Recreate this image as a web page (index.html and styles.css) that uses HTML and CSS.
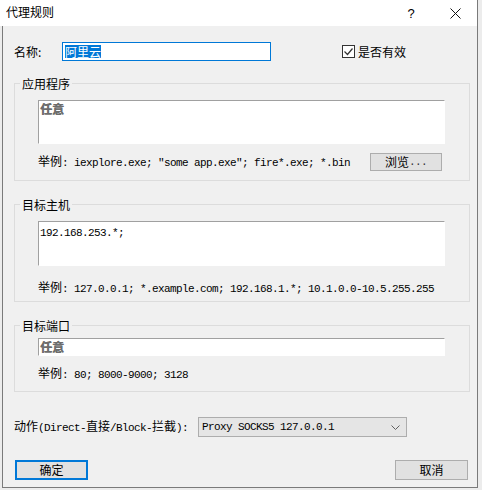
FILE: index.html
```html
<!DOCTYPE html>
<html lang="zh-CN">
<head>
<meta charset="utf-8">
<title>代理规则</title>
<link rel="stylesheet" href="styles.css">
</head>
<body>
<div class="win">
  <div class="titlebar">
    <span class="title">代理规则</span>
    <span class="tb-btn help">?</span>
    <span class="tb-btn close"><svg width="11" height="11" viewBox="0 0 11 11"><path d="M0.5 0.5 L10.5 10.5 M10.5 0.5 L0.5 10.5" stroke="#111" stroke-width="1" fill="none"/></svg></span>
  </div>
  <div class="client">
    <div class="name-row">
      <span class="name-label">名称:</span>
      <div class="name-input"><span class="sel">阿里云</span></div>
      <label class="chk"><span class="box"><svg width="11" height="11" viewBox="0 0 11 11"><path d="M1.5 5.5 L4.5 8.5 L9.5 2.5" stroke="#333" stroke-width="1.2" fill="none"/></svg></span>是否有效</label>
    </div>

    <fieldset class="group g1">
      <legend>应用程序</legend>
      <div class="gbody">
        <div class="edit tall1"><span class="ph">任意</span></div>
        <div class="ex-row">
          <span class="mono"><span class="c">举例</span>: iexplore.exe; "some app.exe"; fire*.exe; *.bin</span>
          <span class="btn browse"><span>浏览</span><span class="mono dots">...</span></span>
        </div>
      </div>
    </fieldset>

    <fieldset class="group g2">
      <legend>目标主机</legend>
      <div class="gbody">
        <div class="edit tall2"><span class="mono">192.168.253.*;</span></div>
        <div class="ex-row">
          <span class="mono"><span class="c">举例</span>: 127.0.0.1; *.example.com; 192.168.1.*; 10.1.0.0-10.5.255.255</span>
        </div>
      </div>
    </fieldset>

    <fieldset class="group g3">
      <legend>目标端口</legend>
      <div class="gbody">
        <div class="edit short"><span class="ph">任意</span></div>
        <div class="ex-row">
          <span class="mono"><span class="c">举例</span>: 80; 8000-9000; 3128</span>
        </div>
      </div>
    </fieldset>

    <div class="action-row">
      <span class="mono action-label"><span class="c">动作</span>(Direct-<span class="c">直接</span>/Block-<span class="c">拦截</span>):</span>
      <div class="select">
        <span class="mono">Proxy SOCKS5 127.0.0.1</span>
        <svg class="chev" width="9" height="5" viewBox="0 0 9 5"><path d="M0.5 0.5 L4.5 4.5 L8.5 0.5" stroke="#606060" stroke-width="1" fill="none"/></svg>
      </div>
    </div>

    <div class="btn-row">
      <span class="btn ok">确定</span>
      <span class="btn cancel">取消</span>
    </div>
  </div>
</div>
</body>
</html>
```

FILE: styles.css
```css
* { box-sizing: border-box; }
html, body { margin: 0; padding: 0; }
body {
  width: 482px;
  height: 490px;
  overflow: hidden;
  background: #ececec;
  font-family: "Noto Sans CJK SC", "Microsoft YaHei", sans-serif;
  font-size: 12px;
  color: #000;
}
.win {
  width: 478px;
  border-right: 1px solid #7a7a7a;
}
.titlebar {
  height: 26px;
  background: #fff;
  display: flex;
  align-items: center;
}
.title {
  flex: 1;
  padding-left: 6px;
  line-height: 14px;
  margin-top: -2px;
}
.tb-btn {
  width: 44px;
  height: 26px;
  display: flex;
  align-items: center;
  justify-content: center;
}
.help {
  font-family: "Liberation Sans", Arial, sans-serif;
  font-size: 13px;
  padding-top: 1px;
}
.close { padding-top: 1px; }
.client {
  margin-left: 2px;
  border-left: 1px solid #7a7a7a;
  border-bottom: 1px solid #7a7a7a;
  background: #f0f0f0;
  height: 462px;
  padding: 16px 7px 0 11px;
  display: flex;
  flex-direction: column;
}
.name-row {
  height: 19px;
  display: flex;
  align-items: center;
}
.name-label { width: 48px; line-height: 14px; }
.name-input {
  width: 209px;
  height: 19px;
  border: 1px solid #0078d7;
  background: #fff;
  padding-left: 2px;
  display: flex;
  align-items: center;
}
.sel {
  display: inline-block;
  height: 13px;
  line-height: 13px;
  background: #0078d7;
  color: #fff;
}
.chk {
  margin-left: 71px;
  display: flex;
  align-items: center;
  gap: 3px;
  line-height: 14px;
}
.box {
  width: 13px;
  height: 13px;
  border: 1px solid #333;
  background: #fff;
  display: flex;
  align-items: center;
  justify-content: center;
}
.group {
  margin: 0;
  padding: 0;
  width: 456px;
  min-width: 0;
  border: 1px solid #dcdcdc;
}
.group legend {
  margin-left: 5px;
  padding: 0 2px;
  line-height: 15px;
  font-size: 12px;
}
.g1 { margin-top: 15px; }
.g2, .g3 { margin-top: 16px; }
.gbody { padding: 9px 24px 9px 23px; }
.g2 .gbody { padding-bottom: 5px; }
.g3 .gbody { padding-top: 5px; }
.edit {
  width: 407px;
  background: #fff;
  border-top: 1px solid #a0a0a0;
  border-left: 1px solid #a0a0a0;
  border-right: 1px solid #fff;
  border-bottom: 1px solid #fff;
  padding: 1px 0 0 1px;
  line-height: 14px;
}
.tall1 { height: 44px; }
.tall2 { height: 45px; padding-top: 2px; }
.short { height: 18px; padding-top: 1px; }
.ph {
  font-weight: 700;
  color: #6d6d6d;
  text-shadow: 0.6px 0 0 #6d6d6d;
}
.ex-row {
  margin-top: 10px;
  display: flex;
  justify-content: space-between;
  align-items: center;
  line-height: 14px;
}
.g1 .ex-row { height: 18px; margin-top: 9px; }
.g2 .ex-row { margin-top: 14px; }
.mono {
  font-family: "Liberation Mono", "Noto Sans CJK SC", monospace;
  font-size: 11px;
  letter-spacing: -0.6px;
  white-space: pre;
  line-height: 14px;
}
.mono .c {
  font-family: "Noto Sans CJK SC", sans-serif;
  font-size: 12px;
  letter-spacing: 0;
}
.btn {
  display: flex;
  align-items: center;
  justify-content: center;
  background: #e1e1e1;
  border: 1px solid #adadad;
  line-height: 14px;
}
.browse {
  width: 72px;
  height: 18px;
  margin-right: 3px;
}
.dots { color: #333; }
.action-row {
  margin-top: 25px;
  height: 20px;
  display: flex;
  align-items: center;
}
.action-label { width: 184px; }
.select {
  width: 209px;
  height: 20px;
  background: #e5e5e5;
  border: 1px solid #adadad;
  padding: 0 6px 0 3px;
  display: flex;
  align-items: center;
  justify-content: space-between;
}
.btn-row {
  margin-top: 23px;
  display: flex;
  justify-content: space-between;
}
.ok {
  width: 73px;
  height: 20px;
  margin-left: 1px;
  border: 2px solid #0078d7;
}
.cancel {
  width: 73px;
  height: 20px;
  margin-right: 2px;
}
```
